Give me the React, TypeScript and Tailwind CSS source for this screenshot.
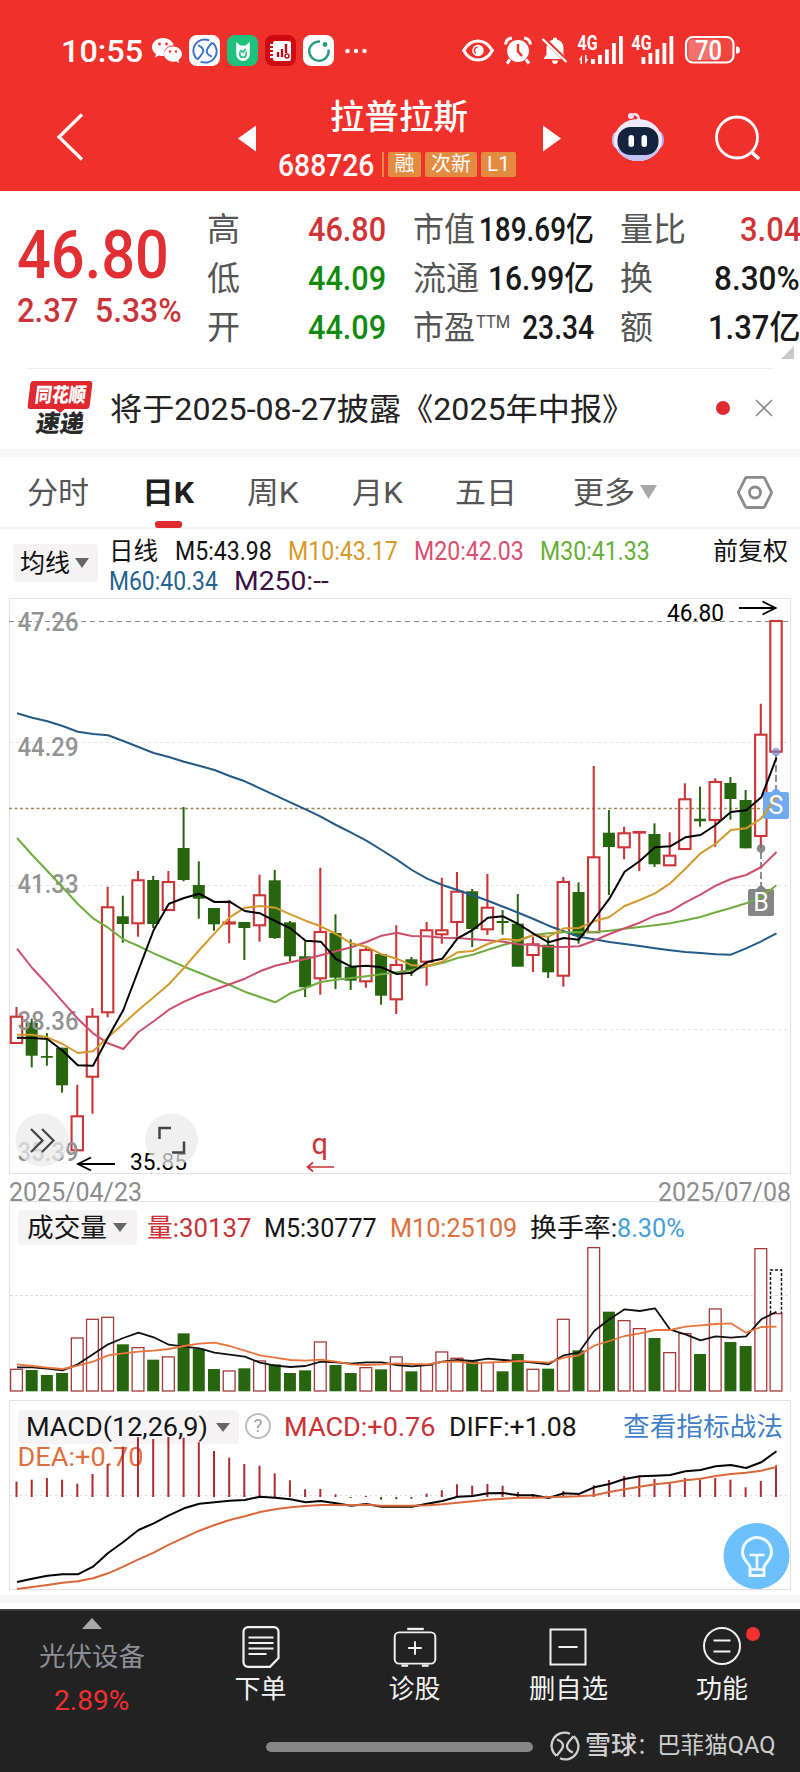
import { useLayoutEffect, useRef, useState } from "react";
import type { ReactNode } from "react";

/* One line of text, condensed or widened to fill the width of its own box. */
function Fit({ className, children }: { className: string; children: ReactNode }) {
  const box = useRef<HTMLDivElement>(null);
  const line = useRef<HTMLSpanElement>(null);
  const [scale, setScale] = useState(1);
  useLayoutEffect(() => {
    if (box.current && line.current && line.current.offsetWidth > 0) {
      setScale(box.current.clientWidth / line.current.offsetWidth);
    }
  }, []);
  return (
    <div ref={box} className={`shrink-0 ${className}`}>
      <span ref={line} className="inline-block origin-left whitespace-nowrap" style={{ transform: `scaleX(${scale})` }}>
        {children}
      </span>
    </div>
  );
}

const RED = "#cc3538";
const GREEN = "#28650f";
const X0 = 16.5;
const STEP = 15.19;
const px = (i: number) => X0 + i * STEP;

type Candle = ["r" | "g", number, number, number, number];

/* colour, high, body top, body bottom, low */
const candles: Candle[] = [
  ["r", 1007, 1016.7, 1043, 1043],
  ["g", 1018.7, 1022.7, 1055.7, 1067.3],
  ["g", 1033, 1056, 1057.7, 1065.7],
  ["g", 1047.7, 1047.7, 1085.3, 1092.7],
  ["r", 1084.7, 1116.3, 1150.3, 1150.3],
  ["r", 1008, 1016.7, 1076.7, 1113.7],
  ["r", 886.7, 907.3, 1012.3, 1017.3],
  ["g", 895.7, 916.3, 924, 942.7],
  ["r", 871, 880.3, 923.3, 936.7],
  ["g", 876, 880, 924, 928],
  ["r", 871, 882, 910, 910],
  ["g", 807, 848, 880, 881.3],
  ["g", 861.3, 885, 898.7, 918.7],
  ["g", 908, 908, 924.3, 930.7],
  ["r", 900, 922.5, 923.5, 943.3],
  ["g", 922, 922, 928, 960],
  ["r", 874.7, 895.3, 925.3, 941.7],
  ["g", 870, 880.3, 938, 939],
  ["g", 921, 922.3, 956.3, 961],
  ["g", 941.3, 956.3, 987.3, 997],
  ["r", 867.7, 932, 978.3, 994.7],
  ["g", 914.3, 933, 977.7, 989],
  ["g", 939.3, 966.7, 980.7, 990],
  ["r", 947.3, 950, 981.3, 987.7],
  ["g", 954, 954, 995.7, 1004.7],
  ["r", 925.3, 965, 999.3, 1014],
  ["g", 957, 959.3, 970, 976],
  ["r", 922, 930.3, 961.7, 985.7],
  ["r", 877.7, 930.3, 934.3, 943.7],
  ["r", 872, 891.7, 922, 936.7],
  ["g", 889, 891.3, 929, 947],
  ["r", 874, 907.7, 929.3, 935],
  ["g", 910, 921, 923, 934.7],
  ["g", 894, 923.7, 966.7, 966.7],
  ["r", 937, 944.3, 955, 972],
  ["g", 937, 944.7, 972.3, 978],
  ["r", 877, 882, 975.7, 986.7],
  ["g", 882.3, 892, 936, 943.7],
  ["r", 766, 857.3, 932.3, 932.3],
  ["g", 810, 832.7, 847, 895],
  ["r", 826.7, 833.3, 847.3, 859.3],
  ["r", 831.5, 832, 832.6, 871],
  ["g", 823.3, 834, 864.3, 867],
  ["r", 832.3, 855.7, 865.3, 865.3],
  ["r", 783.3, 799.3, 849, 849],
  ["g", 786.7, 818.7, 821.3, 826.7],
  ["r", 778.3, 782, 820, 846.7],
  ["g", 777, 783, 799, 819.7],
  ["g", 790, 800, 848.3, 848.3],
  ["r", 703.7, 734.7, 836, 848],
  ["r", 621, 621, 751.7, 751.7],
];

const ma5 = [1037.7, 1038, 1039, 1050.7, 1065.3, 1065.7, 1037.3, 1010, 970, 930, 903.7, 898, 893.7, 902, 901.7, 911, 913.3, 921, 928.3, 940.7, 941.7, 959, 966.7, 965.7, 967.3, 974, 972.7, 962, 958.7, 938.3, 930, 917.7, 916.3, 924, 933.7, 942.3, 938, 939.7, 919, 898.7, 871.7, 861, 847.3, 846.3, 837.3, 835, 825, 812, 810.3, 797.3, 757.7];
const ma10 = [1034.7, 1034.7, 1037.3, 1044, 1053, 1051.3, 1037.3, 1023.7, 1010, 997.3, 984.3, 967.7, 950, 933.3, 917.3, 907.7, 906, 907.7, 914.3, 920.7, 926.3, 934, 943.3, 946.7, 954.3, 958.7, 965.3, 966, 961.7, 952.3, 951, 944, 939, 940.3, 935, 936.7, 928.3, 928, 921.3, 917, 906, 900, 893.3, 883.3, 868.7, 853.3, 843.7, 830, 828.3, 818.3, 796.7];
const ma20 = [948.7, 968, 984.3, 1001.7, 1018.7, 1033.3, 1043.3, 1049, 1032, 1021.3, 1009.7, 1001.7, 995, 989.7, 984.3, 978.7, 971.3, 965.7, 962.3, 959, 955.3, 951.3, 947.3, 942, 935.7, 932.7, 936, 936.3, 937.7, 938, 939.3, 940.3, 941.7, 944.3, 945, 946.7, 947, 946.3, 940.7, 934, 928.3, 922.7, 915.7, 911.3, 902.3, 894.7, 885.7, 879, 875, 867, 852];
const ma30 = [838, 855, 871, 887.3, 904, 918.3, 927.7, 939.3, 946, 953.3, 960, 966.7, 972.7, 979, 985, 991.7, 997, 1002.3, 993.3, 988, 982, 979.7, 978, 976.3, 974.3, 972.3, 970, 966.3, 963, 958, 954.7, 949.7, 945, 941, 935, 933.3, 932.3, 932.3, 932, 930.7, 928.7, 927, 925.3, 923.3, 920.3, 917, 912.3, 908, 903.3, 896.7, 885.3];
const ma60 = [713.3, 717.7, 721.3, 726, 731.7, 734, 735.3, 741, 747, 753, 757, 761.7, 765.7, 770, 776, 781.3, 788.3, 795.3, 802.3, 809.3, 816.7, 825, 832.7, 840.7, 850, 859.7, 870, 878.7, 885, 890, 895.3, 900.7, 906.7, 912.7, 919, 925.7, 931.3, 936.7, 939.3, 942, 944, 946, 948.3, 950.3, 952, 953, 954.3, 954.7, 948.3, 941.3, 933.3];

/* Volume and MACD values are stored at three units per pixel. */
const volTops = [507, 510, 525, 519, 413, 357, 351, 433, 442, 479, 470, 400, 446, 507, 512, 505, 482, 493, 519, 511, 425, 495, 519, 502, 508, 470, 514, 495, 455, 474, 484, 487, 514, 462, 507, 506, 357, 451, 142, 335, 361, 385, 414, 457, 400, 462, 326, 426, 438, 145, 340];
const vol5 = [502, 502, 506, 511, 493, 463, 433, 414, 398, 412, 434, 440, 445, 458, 464, 470, 488, 497, 501, 498, 485, 487, 491, 487, 487, 495, 499, 495, 485, 480, 483, 476, 480, 483, 488, 493, 466, 457, 393, 358, 328, 333, 325, 389, 403, 421, 409, 413, 409, 358, 335];
const vol10 = [493, 498, 503, 507, 497, 485, 466, 460, 455, 452, 447, 438, 431, 428, 438, 452, 466, 473, 480, 482, 479, 485, 493, 495, 493, 490, 492, 493, 486, 484, 490, 487, 486, 483, 485, 488, 473, 466, 437, 423, 408, 400, 390, 390, 380, 376, 372, 370, 398, 381, 380];
const macdTops = [275, 269, 264, 269, 281, 252, 222, 170, 142, 147, 141, 143, 157, 183, 203, 222, 227, 250, 271, 298, 297, 313, 324, 318, 329, 328, 326, 311, 301, 283, 287, 282, 287, 306, 312, 318, 303, 314, 286, 270, 258, 256, 267, 277, 264, 269, 264, 269, 292, 273, 226];
const diff = [576, 566, 557, 553, 553, 530, 489, 456, 420, 400, 376, 355, 341, 337, 332, 330, 320, 323, 328, 337, 333, 340, 347, 342, 350, 350, 350, 341, 333, 320, 318, 310, 309, 316, 316, 324, 310, 312, 292, 282, 267, 259, 257, 255, 244, 240, 229, 225, 234, 217, 184];
const dea = [597, 591, 585, 578, 574, 565, 550, 530, 508, 488, 464, 443, 422, 405, 390, 379, 366, 358, 352, 348, 345, 345, 346, 344, 347, 347, 347, 346, 343, 338, 334, 329, 326, 323, 323, 322, 320, 319, 316, 306, 298, 290, 283, 278, 271, 266, 258, 252, 248, 242, 231];

function Curve({ ys, color, width = 2 }: { ys: number[]; color: string; width?: number }) {
  return (
    <polyline
      points={ys.map((y, i) => `${(px(i) + 0.5).toFixed(1)},${y.toFixed(1)}`).join(" ")}
      fill="none"
      stroke={color}
      strokeWidth={width}
      strokeLinejoin="round"
    />
  );
}

const Down = ({ className }: { className: string }) => (
  <svg viewBox="0 0 10 10" preserveAspectRatio="none" className={`shrink-0 ${className}`}>
    <path d="M0 0h10L5 10z" fill="currentColor" />
  </svg>
);

function SnowLogo({ className, color }: { className: string; color: string }) {
  return (
    <svg viewBox="0 0 30 30" className={className} fill="none" stroke={color} strokeWidth="2.300">
      <path d="M20 2.800A13 13 0 0 0 6.500 24.800M10 27.200A13 13 0 0 0 23.500 5.200" />
      <path d="M7 8.500c4 1.500 6 3.500 6 6.500s-2.500 4.500-6.500 9.800M23.500 5.200C19.500 10 17 12 17 15s2 5 6 6.500" />
    </svg>
  );
}

function StatusBar() {
  return (
    <div className="flex h-[101px] items-start pt-[35px] text-white">
      <Fit className="ml-[61px] w-[82px] text-[32px] leading-[32px] font-medium">10:55</Fit>
      <svg viewBox="0 0 30 26" className="mt-[3px] ml-[9px] h-[26px] w-[30px]">
        <path d="M11 0C5 0 0 4 0 9c0 3 1.500 5.300 4 7l-1 3.500 4-2c1.500.5 3 .6 5 .5-1-6 3-10.500 9.800-10.700C20.500 3 16 0 11 0z" fill="#fff" />
        <path d="M21 8.500c-5 0-9 3.500-9 7.600s4 7.600 9 7.600c1 0 2-.1 3-.5l3.200 2-.8-3c2.200-1.500 3.600-3.600 3.600-6.100 0-4.100-4-7.600-9-7.600z" fill="#fff" />
        <g fill="#ef312b"><circle cx="7.500" cy="6" r="1.400" /><circle cx="14.500" cy="6" r="1.400" /><circle cx="18" cy="13.500" r="1.200" /><circle cx="24" cy="13.500" r="1.200" /></g>
      </svg>
      <div className="ml-[7px] flex h-[31px] w-[31px] items-center justify-center rounded-[8px] bg-white">
        <SnowLogo className="h-[26px] w-[26px]" color="#3b74c9" />
      </div>
      <div className="ml-[7px] flex h-[31px] w-[31px] items-center justify-center rounded-[8px] bg-[#1fc27c]">
        <svg viewBox="0 0 20 24" className="h-[24px] w-[18px]">
          <path d="M2.500 2l4.500 4h6l4.500-4v13.500a7.500 7.500 0 0 1-15 0z" fill="#fff" />
          <path d="M6.500 12.500v3a3.500 3.500 0 0 0 7 0v-3M7 11l3 2.500 3-4" fill="none" stroke="#1fc27c" strokeWidth="1.800" />
        </svg>
      </div>
      <div className="ml-[7px] flex h-[31px] w-[31px] items-center justify-center rounded-[8px] bg-[#cf0a12]">
        <svg viewBox="0 0 22 22" className="h-[22px] w-[22px]">
          <rect x="3" y="1" width="18" height="20" rx="2" fill="#fff" />
          <path d="M0 5h5M0 9h5M0 13h5M0 17h5" stroke="#fff" strokeWidth="1.800" />
          <path d="M8 17v-5M12 17V9M16 13V4" stroke="#b30b12" strokeWidth="2.400" />
          <circle cx="17" cy="16" r="2" fill="none" stroke="#b30b12" strokeWidth="1.500" />
        </svg>
      </div>
      <div className="ml-[7px] flex h-[31px] w-[31px] items-center justify-center rounded-[8px] bg-white">
        <svg viewBox="0 0 24 24" className="h-[24px] w-[24px]">
          <path d="M13 2.500a9.700 9.700 0 1 0 8.500 8" fill="none" stroke="#2a9a80" strokeWidth="2.400" />
          <circle cx="18" cy="5.500" r="2.400" fill="#2a9a80" />
        </svg>
      </div>
      <svg viewBox="0 0 22 6" className="mt-[13px] ml-[11px] h-[6px] w-[22px]" fill="#fff">
        <circle cx="2.500" cy="3" r="2.200" /><circle cx="11" cy="3" r="2.200" /><circle cx="19.500" cy="3" r="2.200" />
      </svg>
      <svg viewBox="0 0 34 24" className="mt-[4px] ml-[94px] h-[23px] w-[34px]">
        <path d="M2 12C6 5 11 2 17 2s11 3 15 10c-4 7-9 10-15 10S6 19 2 12z" fill="none" stroke="#fff" strokeWidth="3.200" />
        <circle cx="17" cy="12" r="6" fill="#fff" />
        <path d="M16.500 8.500a3.500 3.500 0 0 0-1.500 6.500" stroke="#ef312b" strokeWidth="1.500" fill="none" />
      </svg>
      <svg viewBox="0 0 28 28" className="mt-[1px] ml-[9px] h-[29px] w-[28px]">
        <circle cx="14" cy="14.500" r="11" fill="#fff" />
        <path d="M1.500 8C2 4 5 1.800 8 1.500M26.500 8C26 4 23 1.800 20 1.500M6 23l-3 4M22 23l3 4" stroke="#fff" strokeWidth="3" fill="none" />
        <path d="M14 7.500V15l4 4.500" stroke="#ef312b" strokeWidth="2.400" fill="none" />
      </svg>
      <svg viewBox="0 0 28 28" className="mt-[1px] ml-[9px] h-[29px] w-[28px]">
        <path d="M14 1c1.500 0 2.200.8 2.200 2.200C20 4 22.500 7 22.500 12v6l3 4.500H2.500l3-4.500v-6c0-5 2.500-8 6.300-8.800C11.800 1.800 12.500 1 14 1zM11 24h6c0 2-1.200 3.500-3 3.500S11 26 11 24z" fill="#fff" />
        <path d="M2.500 2l23.500 23" stroke="#ef312b" strokeWidth="4.500" />
        <path d="M1.500 2.500l24 23" stroke="#fff" strokeWidth="2.200" />
      </svg>
      <svg viewBox="578 25 170 42" className="-mt-[10px] ml-[8px] h-[42px] w-[170px] overflow-visible" fill="#fff" fontFamily="Roboto" fontWeight="700">
        <text x="578.500" y="50" fontSize="20" textLength="20" lengthAdjust="spacingAndGlyphs">4G</text>
        <path d="M580 60l3-5v9h-1.500v-4zM586 64l3.500-5h-2v-4H586z" />
        <path d="M592 59h3.800v5H592zM599 55h3.800v9H599zM606 49.500h3.800V64H606zM613 43h3.800v21H613zM620 36h3.800v28H620z" />
        <text x="632.500" y="50" fontSize="20" textLength="20" lengthAdjust="spacingAndGlyphs">4G</text>
        <path d="M642.500 57h3.800v7h-3.800zM649.500 53h3.800v11h-3.800zM656.500 49h3.800v15h-3.800zM663.500 43h3.800v21h-3.800zM670.500 36h3.800v28h-3.800z" />
        <rect x="687" y="37" width="47.500" height="25.500" rx="7" fill="#f0453f" stroke="#fff" strokeWidth="2.200" />
        <rect x="689.500" y="39.500" width="32" height="20.500" rx="4" fill="#fff" opacity=".24" />
        <path d="M737 46.500h1a2.500 3 0 0 1 0 7h-1z" />
        <text x="696" y="59.500" fontSize="27" fontWeight="500" textLength="27" lengthAdjust="spacingAndGlyphs">70</text>
      </svg>
    </div>
  );
}

function TitleBar() {
  return (
    <div className="flex h-[90px] text-white">
      <svg viewBox="0 0 28 48" className="mt-[12px] ml-[56px] h-[48px] w-[28px] shrink-0" fill="none" stroke="#fff" strokeWidth="3.200">
        <path d="M26 1.500L3 24l23 22.500" />
      </svg>
      <svg viewBox="0 0 18 26" className="mt-[24px] ml-[154px] h-[27px] w-[18px] shrink-0" fill="#fff"><path d="M18 0v26L0 13z" /></svg>
      <div className="ml-[21px] flex w-[260px] shrink-0 flex-col">
        <Fit className="ml-[53px] h-[34px] w-[138px] text-[34px] leading-[32px] font-medium">拉普拉斯</Fit>
        <div className="mt-[12px] flex items-center">
          <Fit className="ml-px w-[96px] text-[31.500px] leading-[37px] font-medium">688726</Fit>
          <div className="mb-[3px] ml-[8px] h-[25px] w-[2px] bg-[#e78b44]" />
          <div className="mb-[3px] ml-[4px] flex h-[25px] w-[33px] items-center justify-center rounded-[2px] bg-[#e48b42] text-[20px] leading-[22px]">融</div>
          <div className="mb-[3px] ml-[4px] flex h-[25px] w-[52px] items-center justify-center rounded-[2px] bg-[#e48b42] text-[20px] leading-[22px]">次新</div>
          <div className="mb-[3px] ml-[4px] flex h-[25px] w-[35px] items-center justify-center rounded-[2px] bg-[#e48b42] text-[21px] leading-[22px]">L1</div>
        </div>
      </div>
      <svg viewBox="0 0 18 26" className="mt-[24px] ml-[6px] h-[27px] w-[18px] shrink-0" fill="#fff"><path d="M0 0v26l18-13z" /></svg>
      <svg viewBox="0 0 54 50" className="mt-[11px] ml-[50px] h-[50px] w-[54px] shrink-0">
        <path d="M21 3c4-2 7 0 7 6" fill="none" stroke="#f4e6f5" strokeWidth="2.500" />
        <circle cx="20" cy="4" r="3" fill="#f0dff2" />
        <ellipse cx="5" cy="28" rx="4" ry="8" fill="#cdbcf2" />
        <ellipse cx="49" cy="28" rx="4" ry="8" fill="#b9a5ee" />
        <ellipse cx="27" cy="28" rx="24" ry="21" fill="#eeeafb" />
        <path d="M6 37c4 8 12 12 21 12s17-4 21-12z" fill="#c5c2f4" />
        <rect x="6.500" y="15" width="41" height="28" rx="13" fill="#15233f" />
        <rect x="17.500" y="23" width="5.500" height="12" rx="2.700" fill="#fff" />
        <rect x="30.500" y="23" width="5.500" height="12" rx="2.700" fill="#fff" />
      </svg>
      <svg viewBox="0 0 48 48" className="mt-[14px] ml-[50px] h-[48px] w-[48px] shrink-0" fill="none" stroke="#fff" strokeWidth="2.800">
        <circle cx="22" cy="22.500" r="20.500" />
        <path d="M36.500 37l7.500 7" strokeWidth="3.500" />
      </svg>
    </div>
  );
}

function Quote() {
  return (
    <div className="flex h-[177px] w-[800px] overflow-hidden text-[#191919]">
      <div className="w-[190px] shrink-0 pt-[34px] pl-[17px] text-[#e22f33]">
        <Fit className="w-[152px] text-[67px] leading-[60px] font-medium">46.80</Fit>
        <div className="mt-[7px] flex text-[33px] leading-[38px] text-[#c93438]">
          <Fit className="w-[61px] font-medium">2.37</Fit>
          <Fit className="ml-[17px] w-[87px] font-medium">5.33%</Fit>
        </div>
      </div>
      <div className="flex w-[217px] shrink-0 flex-col pt-[14px] pl-[17px] text-[33px] leading-[49px]">
        <div className="flex h-[49px]"><Fit className="w-[33px] text-[#555]">高</Fit><Fit className="ml-[68px] w-[78px] font-medium text-[#cf3438]">46.80</Fit></div>
        <div className="flex h-[49px]"><Fit className="w-[33px] text-[#555]">低</Fit><Fit className="ml-[68px] w-[78px] font-medium text-[#128a10]">44.09</Fit></div>
        <div className="flex h-[49px]"><Fit className="w-[33px] text-[#555]">开</Fit><Fit className="ml-[68px] w-[78px] font-medium text-[#128a10]">44.09</Fit></div>
      </div>
      <div className="flex w-[187px] shrink-0 flex-col pt-[14px] pl-[6px] text-[33px] leading-[49px]">
        <div className="flex h-[49px] justify-between"><Fit className="w-[62px] text-[#555]">市值</Fit><Fit className="w-[115px] font-medium">189.69亿</Fit></div>
        <div className="flex h-[49px] justify-between"><Fit className="w-[66px] text-[#555]">流通</Fit><Fit className="w-[106px] font-medium">16.99亿</Fit></div>
        <div className="flex h-[49px]">
          <Fit className="w-[62px] text-[#555]">市盈</Fit>
          <Fit className="-mt-[6px] ml-px w-[34px] text-[18px] text-[#555]">TTM</Fit>
          <Fit className="ml-[12px] w-[72px] font-medium">23.34</Fit>
        </div>
      </div>
      <div className="flex w-[206px] shrink-0 flex-col pt-[14px] pl-[26px] text-[33px] leading-[49px]">
        <div className="flex h-[49px] justify-between"><Fit className="w-[66px] text-[#555]">量比</Fit><Fit className="mr-[-1px] w-[61px] font-medium text-[#cf3438]">3.04</Fit></div>
        <div className="flex h-[49px] justify-between"><Fit className="w-[33px] text-[#555]">换</Fit><Fit className="w-[86px] font-medium">8.30%</Fit></div>
        <div className="flex h-[49px] justify-between"><Fit className="w-[33px] text-[#555]">额</Fit><Fit className="w-[92px] font-medium">1.37亿</Fit></div>
        <svg viewBox="0 0 13 13" className="-mt-[6px] ml-[161px] h-[13px] w-[13px] shrink-0"><path d="M13 0v13H0z" fill="#c9c9c9" /></svg>
      </div>
    </div>
  );
}

function News() {
  return (
    <div className="flex h-[80px] shrink-0 items-start">
      <div className="ml-[27px] flex h-[68px] w-[66px] shrink-0 flex-col items-center pt-[12px]">
        <div className="flex h-[28px] w-[62px] shrink-0 -skew-x-[7deg] items-center justify-center rounded-[3px] bg-[#e0292e]">
          <Fit className="w-[51px] text-[20px] leading-[22px] font-black text-white">同花顺</Fit>
        </div>
        <svg viewBox="0 0 12 5" className="h-[4px] w-[10px] shrink-0"><path d="M0 0h12L6 5z" fill="#e0292e" /></svg>
        <Fit className="w-[48px] -skew-x-[8deg] text-[24px] leading-[22px] font-black text-[#2a2a2a]">速递</Fit>
      </div>
      <Fit className="ml-[17px] w-[524px] pt-[20px] text-[31px] leading-[42px] text-[#222]">将于2025-08-27披露《2025年中报》</Fit>
      <div className="mt-[32px] ml-[82px] h-[14px] w-[14px] rounded-full bg-[#e02a2f]" />
      <svg viewBox="0 0 18 18" className="mt-[30px] ml-[25px] h-[18px] w-[18px]" stroke="#8a8a8a" strokeWidth="1.700"><path d="M1 1l16 16M17 1L1 17" /></svg>
    </div>
  );
}

function Tabs() {
  return (
    <div className="flex h-[72px] shrink-0 border-b-2 border-[#f3f3f3] text-[30px] leading-[72px] text-[#555]">
      <Fit className="ml-[27px] w-[62px]">分时</Fit>
      <div className="ml-[52px] flex w-[54px] flex-col items-center">
        <Fit className="h-[64px] w-[52px] font-bold text-[#1f1f1f]">日K</Fit>
        <div className="h-[7px] w-[27px] shrink-0 rounded-[3px] bg-[#df2a2f]" />
      </div>
      <Fit className="ml-[52px] w-[52px]">周K</Fit>
      <Fit className="ml-[53px] w-[51px]">月K</Fit>
      <Fit className="ml-[52px] w-[62px]">五日</Fit>
      <Fit className="ml-[56px] w-[62px]">更多</Fit>
      <Down className="mt-[28px] ml-[5px] h-[14px] w-[17px] text-[#a8a8a8]" />
      <svg viewBox="0 0 36 34" className="mt-[18px] ml-[80px] h-[35px] w-[36px]" fill="none" stroke="#8b8b8b" strokeWidth="2.800">
        <path d="M10 1.800h16a2 2 0 0 1 1.700 1L34 15.500a3 3 0 0 1 0 3L27.700 31a2 2 0 0 1-1.700 1H10a2 2 0 0 1-1.700-1L2 18.500a3 3 0 0 1 0-3L8.300 2.800a2 2 0 0 1 1.700-1z" />
        <circle cx="18" cy="17" r="5.500" />
      </svg>
    </div>
  );
}

function Legend() {
  return (
    <div className="flex h-[69px] shrink-0 text-[25px] leading-[30px] text-[#111]">
      <div className="mt-[15px] ml-[13px] flex h-[38px] w-[85px] items-center rounded-[4px] bg-[#f5f3f4]">
        <Fit className="mt-[2px] ml-[7px] w-[50px]">均线</Fit>
        <Down className="ml-[5px] h-[10px] w-[14px] text-[#666]" />
      </div>
      <div className="ml-[11px] flex w-[590px] flex-col pt-[8px]">
        <div className="flex">
          <Fit className="w-[49px]">日线</Fit>
          <Fit className="ml-[17px] w-[97px]">M5:43.98</Fit>
          <Fit className="ml-[16px] w-[110px] text-[#d59a28]">M10:43.17</Fit>
          <Fit className="ml-[16px] w-[110px] text-[#d84f70]">M20:42.03</Fit>
          <Fit className="ml-[16px] w-[110px] text-[#67ae38]">M30:41.33</Fit>
        </div>
        <div className="flex">
          <Fit className="w-[109px] text-[#24628f]">M60:40.34</Fit>
          <Fit className="ml-[16px] w-[95px] text-[#3c1046]">M250:--</Fit>
        </div>
      </div>
      <Fit className="ml-[14px] w-[75px] pt-[8px]">前复权</Fit>
    </div>
  );
}

const axis = [["47.26", 630.5], ["44.29", 755.5], ["41.33", 892.5], ["38.36", 1030], ["35.39", 1161]] as const;

function KLine() {
  return (
    <svg viewBox="0 598 800 576" className="block h-[576px] w-[800px] shrink-0 overflow-visible" fontFamily="Roboto">
      <rect x="9.500" y="598.500" width="781" height="575" fill="none" stroke="#e2e2e2" />
      <g stroke="#e4e4e4" strokeDasharray="3 3">
        <path d="M10 742.500H790M10 885.500H790M10 1029.500H790" />
      </g>
      <path d="M9 621.500H788" stroke="#8c8682" strokeWidth="1.200" strokeDasharray="5 4" />
      <path d="M9 808.500H790" stroke="#a58a5c" strokeWidth="1.500" strokeDasharray="3 2.500" />
      {candles.map(([c, hi, top, bottom, lo], i) => {
        const x = px(i);
        return c === "r" ? (
          <g key={i} stroke={RED} strokeWidth="2.100" fill="none">
            <path d={`M${x} ${hi}V${top}M${x} ${bottom}V${lo}`} />
            <rect x={x - 5.7} y={top} width="11.400" height={Math.max(bottom - top, 0.5)} />
          </g>
        ) : (
          <g key={i} fill={GREEN}>
            <rect x={x - 1} y={hi} width="2" height={lo - hi} />
            <rect x={x - 6} y={top} width="12" height={bottom - top} />
          </g>
        );
      })}
      <g fontSize="26" fontWeight="500" fill="#939393">
        {axis.map(([t, y]) => (
          <text key={t} x="17.500" y={y} textLength="61" lengthAdjust="spacingAndGlyphs">{t}</text>
        ))}
      </g>
      <path d="M776 755V792M761 852V886" stroke="#555" strokeWidth="1.300" strokeDasharray="7 3" />
      <circle cx="776" cy="752" r="4" fill="#6f82cc" opacity=".7" />
      <circle cx="761" cy="848.500" r="4.300" fill="#777" opacity=".85" />
      <path d="M765 792h6l5-4.500 5 4.500h6a2 2 0 0 1 2 2v23a2 2 0 0 1-2 2h-22a2 2 0 0 1-2-2v-23a2 2 0 0 1 2-2z" fill="#72aaf0" />
      <path d="M750 889h6l5-4.500 5 4.500h6a2 2 0 0 1 2 2v23a2 2 0 0 1-2 2h-22a2 2 0 0 1-2-2v-23a2 2 0 0 1 2-2z" fill="#858585" />
      <Curve ys={ma60} color="#245a86" />
      <Curve ys={ma30} color="#70ad41" />
      <Curve ys={ma20} color="#cc4f6c" />
      <Curve ys={ma10} color="#d29a2c" />
      <Curve ys={ma5} color="#000" />
      <g fill="#fff" fontSize="25" textAnchor="middle"><text x="776" y="814">S</text><text x="761" y="911">B</text></g>
      <text x="130" y="1170" fontSize="24.500" textLength="57" lengthAdjust="spacingAndGlyphs">35.85</text>
      <path d="M115 1164H78M91 1157.500L78 1164l13 6.500" fill="none" stroke="#000" strokeWidth="1.900" />
      <text x="667" y="621" fontSize="24.500" textLength="57" lengthAdjust="spacingAndGlyphs">46.80</text>
      <path d="M739 608H775M762.500 601.500L775.500 608l-13 6.500" fill="none" stroke="#000" strokeWidth="1.900" />
      <text x="311.500" y="1154" fontSize="29" fill={RED}>q</text>
      <path d="M334 1167H308M313 1162.500L307.500 1167l5.500 4.500" fill="none" stroke={RED} strokeWidth="1.700" />
      <g fill="#ebebeb" opacity=".72"><circle cx="42" cy="1140" r="26.500" /><circle cx="171.500" cy="1140" r="26.500" /></g>
      <g fill="none" stroke="#444" strokeWidth="2.200">
        <path d="M31 1129l11.500 11.500L31 1152M42 1129l11.500 11.500L42 1152" />
        <path d="M159.500 1139v-11H171M172 1152.500h12v-11" strokeWidth="2.500" />
      </g>
    </svg>
  );
}

function Volume() {
  return (
    <div className="grid h-[191px] shrink-0">
      <svg viewBox="0 1201 800 191" className="h-[191px] w-[800px] [grid-area:1/1]">
        <path d="M9.500 1392V1201.500H790.500V1392" fill="none" stroke="#e2e2e2" />
        <path d="M10 1295.500H790" stroke="#dedede" strokeDasharray="3 2" />
        {volTops.map((v, i) => {
          const y = 1200 + v / 3;
          return candles[i][0] === "r" ? (
            <rect key={i} x={px(i) - 5.9} y={y + 0.3} width="11.800" height={1390.7 - y} fill="#fff" stroke="#a8383b" strokeWidth="1.300" />
          ) : (
            <rect key={i} x={px(i) - 6} y={y} width="12" height={1391.3 - y} fill={GREEN} />
          );
        })}
        <path d="M770.500 1313.500V1270h11v43.500" fill="none" stroke="#111" strokeWidth="1.500" strokeDasharray="3 1.800" />
        <Curve ys={vol5.map((v) => 1200 + v / 3)} color="#111" width={1.8} />
        <Curve ys={vol10.map((v) => 1200 + v / 3)} color="#e9743c" width={1.8} />
      </svg>
      <div className="flex h-[36px] items-center pt-[17px] text-[26px] leading-[36px] text-[#151515] [grid-area:1/1]">
        <div className="ml-[18px] flex h-[35px] w-[119px] shrink-0 items-center rounded-[4px] bg-[#f5f3f4]">
          <Fit className="mt-px ml-[9px] w-[80px]">成交量</Fit>
          <Down className="ml-[6px] h-[9px] w-[14px] text-[#666]" />
        </div>
        <Fit className="mt-px ml-[10px] w-[104px] text-[#c93236]">量:30137</Fit>
        <Fit className="mt-px ml-[13px] w-[113px]">M5:30777</Fit>
        <Fit className="mt-px ml-[13px] w-[127px] text-[#de7040]">M10:25109</Fit>
        <Fit className="mt-px ml-[13px] w-[87px]">换手率:</Fit>
        <Fit className="mt-px w-[68px] text-[#459fd6]">8.30%</Fit>
      </div>
    </div>
  );
}

function Macd() {
  return (
    <div className="mt-[8px] grid h-[190px] shrink-0">
      <div className="flex h-[46px] items-center text-[26px] leading-[36px] text-[#151515] [grid-area:1/1]">
        <div className="mt-[8px] ml-[18px] flex h-[34px] w-[221px] shrink-0 items-center rounded-[4px] bg-[#f6f3f5]">
          <Fit className="ml-[8px] w-[182px]">MACD(12,26,9)</Fit>
          <Down className="ml-[8px] h-[9px] w-[14px] text-[#666]" />
        </div>
        <div className="mt-[6px] ml-[6px] flex h-[26px] w-[26px] shrink-0 items-center justify-center rounded-full border-2 border-[#bdbdbd] text-[19px] leading-[20px] text-[#a0a0a0]">?</div>
        <Fit className="mt-[7px] ml-[13px] w-[151px] text-[#c93236]">MACD:+0.76</Fit>
        <Fit className="mt-[7px] ml-[14px] w-[128px]">DIFF:+1.08</Fit>
        <Fit className="mt-[7px] ml-[46px] w-[160px] text-[#417fc8]">查看指标战法</Fit>
      </div>
      <svg viewBox="0 1400 800 190" className="h-[190px] w-[800px] [grid-area:1/1]" fontFamily="Roboto">
        <rect x="9.500" y="1400.500" width="781" height="189" fill="none" stroke="#e2e2e2" />
        <path d="M10 1495.500H790" stroke="#dedede" strokeDasharray="2 3" />
        <text x="17.500" y="1466" fontSize="26" fill="#de7040" textLength="126" lengthAdjust="spacingAndGlyphs">DEA:+0.70</text>
        {macdTops.map((v, i) => (
          <path key={i} d={`M${px(i).toFixed(1)} 1497V${(1390 + v / 3).toFixed(1)}`} stroke={v > 321 ? GREEN : "#ad2a2e"} strokeWidth="2" />
        ))}
        <Curve ys={diff.map((v) => 1390 + v / 3)} color="#050505" />
        <Curve ys={dea.map((v) => 1390 + v / 3)} color="#d9693a" />
        <circle cx="756.500" cy="1556" r="33" fill="#6cc0fb" />
        <g fill="none" stroke="#eefaff" strokeWidth="3">
          <path d="M750 1575.500v-8c0-4-7.500-7-7.500-15.500a14.500 14.500 0 0 1 29 0c0 8.500-7.500 11.500-7.500 15.500v8z" />
          <path d="M749.500 1555h15M757 1555v14M750 1569.500h14" strokeWidth="2.600" />
        </g>
      </svg>
    </div>
  );
}

function BottomBar() {
  return (
    <div className="flex h-[163px] shrink-0 flex-col border-t-2 border-[#3c3c3c] bg-[#222] text-[#f1f1f1]">
      <div className="flex h-[120px] text-[26px] leading-[30px]">
        <div className="flex w-[183px] shrink-0 flex-col items-center pt-[7px]">
          <svg viewBox="0 0 20 11" className="h-[11px] w-[20px] shrink-0"><path d="M10 0l10 11H0z" fill="#a9a9a9" /></svg>
          <Fit className="mt-[13px] w-[106px] text-[#8e8e96]">光伏设备</Fit>
          <Fit className="mt-[14px] w-[75px] text-[27px] text-[#f02f30]">2.89%</Fit>
        </div>
        <div className="flex w-[155px] shrink-0 flex-col items-center pt-[15px]">
          <svg viewBox="0 0 38 42" className="h-[42px] w-[38px] shrink-0" fill="none" stroke="currentColor" strokeWidth="2.200">
            <path d="M6 1.200h26a4.500 4.500 0 0 1 4.500 4.500V32L28 40.800H6a4.500 4.500 0 0 1-4.500-4.500V5.700A4.500 4.500 0 0 1 6 1.200z" />
            <path d="M6.500 11.500h25M6.500 17h25M6.500 22.500h25M6.500 28h18" />
          </svg>
          <Fit className="mt-[6px] w-[52px]">下单</Fit>
        </div>
        <div className="flex w-[153px] shrink-0 flex-col items-center pt-[16px]">
          <svg viewBox="0 0 44 42" className="h-[41px] w-[44px] shrink-0" fill="none" stroke="currentColor" strokeWidth="2">
            <rect x="1.200" y="5.500" width="41.600" height="32" rx="4.500" />
            <path d="M14 2h17" strokeWidth="2.400" /><path d="M22 14.500v14M15 21.500h14" />
            <path d="M8 39.500h7M29 39.500h7" strokeWidth="2.400" />
          </svg>
          <Fit className="mt-[6px] w-[52px]">诊股</Fit>
        </div>
        <div className="flex w-[154px] shrink-0 flex-col items-center pt-[17px]">
          <svg viewBox="0 0 38 38" className="h-[38px] w-[38px] shrink-0" fill="none" stroke="currentColor" strokeWidth="2">
            <rect x="1.500" y="1.500" width="35" height="35" /><path d="M9.500 19h19" />
          </svg>
          <Fit className="mt-[8px] w-[79px]">删自选</Fit>
        </div>
        <div className="flex w-[154px] shrink-0 flex-col items-center pt-[15px]">
          <div className="relative h-[40px] w-[38px] shrink-0">
            <svg viewBox="0 0 38 40" className="h-[40px] w-[38px]" fill="none" stroke="currentColor" strokeWidth="2">
              <circle cx="19" cy="20" r="18" /><path d="M10.500 14.500h17M10.500 25.500h17" />
            </svg>
            <div className="absolute top-px left-[43px] h-[14px] w-[14px] rounded-full bg-[#f2302f]" />
          </div>
          <Fit className="mt-[8px] w-[52px]">功能</Fit>
        </div>
      </div>
      <div className="flex h-[30px] items-center">
        <div className="mt-[2px] ml-[266px] h-[10px] w-[267px] rounded-full bg-[#868686]" />
        <SnowLogo className="ml-[17px] h-[30px] w-[30px]" color="#cfcfcf" />
        <Fit className="ml-[5px] w-[52px] text-[25px] leading-[32px] font-medium text-[#cfcfcf]">雪球</Fit>
        <Fit className="w-[20px] text-[22px] leading-[32px] text-[#cfcfcf]">：</Fit>
        <Fit className="w-[119px] text-[23px] leading-[32px] text-[#cfcfcf]">巴菲猫QAQ</Fit>
      </div>
    </div>
  );
}

export default function App() {
  return (
    <div className="flex h-[1772px] w-[800px] flex-col overflow-hidden bg-white font-['Roboto','Noto_Sans_CJK_SC',sans-serif]">
      <div className="h-[191px] shrink-0 bg-[#f0312b]">
        <StatusBar />
        <TitleBar />
      </div>
      <Quote />
      <div className="mx-[26px] h-px shrink-0 bg-[#f0f0f0]" />
      <News />
      <div className="h-[8px] shrink-0 bg-[#f7f7f7]" />
      <Tabs />
      <Legend />
      <KLine />
      <div className="flex h-[27px] shrink-0 items-center justify-between px-[9px] pt-[11px] text-[25px] leading-[28px] text-[#8d8d8d]">
        <Fit className="w-[133px]">2025/04/23</Fit>
        <Fit className="w-[133px]">2025/07/08</Fit>
      </div>
      <Volume />
      <Macd />
      <div className="mt-[5px] h-[8px] shrink-0 bg-[#f7f7f7]" />
      <div className="h-[6px] shrink-0" />
      <BottomBar />
    </div>
  );
}
